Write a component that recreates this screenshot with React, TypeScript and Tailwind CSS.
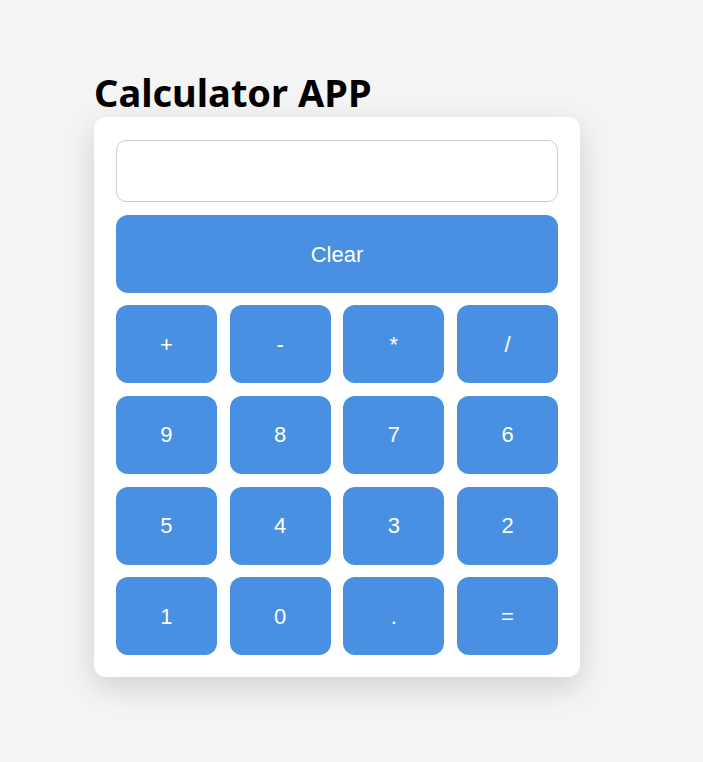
import { useState } from 'react';

const keys = ['+', '-', '*', '/', '9', '8', '7', '6', '5', '4', '3', '2', '1', '0', '.', '='];

export default function App() {
  const [value, setValue] = useState('');

  const press = (k: string) => {
    if (k === '=') {
      try {
        // eslint-disable-next-line no-new-func
        setValue(String(Function(`return (${value})`)()));
      } catch {
        setValue('Error');
      }
      return;
    }
    setValue((v) => v + k);
  };

  return (
    <div className="min-h-[762px] bg-[#f4f4f4] pt-[69px] pl-[94px]">
      <h1 className="text-[38px] font-bold leading-[47px] text-black font-['Noto_Sans',sans-serif]">
        Calculator APP
      </h1>
      <div className="mt-[1px] w-[486px] rounded-[12px] bg-white p-[22px] pt-[23px] shadow-[0_10px_30px_rgba(0,0,0,0.15)]">
        <input
          value={value}
          readOnly
          className="block h-[62px] w-full rounded-[10px] border border-[#cccccc] bg-white px-3 text-right text-2xl outline-none font-['Liberation_Sans',sans-serif]"
        />
        <button
          onClick={() => setValue('')}
          className="mt-[13px] block h-[78px] w-full rounded-[12px] bg-[#4a90e2] text-[22px] text-white font-['Liberation_Sans',sans-serif]"
        >
          Clear
        </button>
        <div className="mt-[12px] grid grid-cols-4 gap-[12.8px]">
          {keys.map((k) => (
            <button
              key={k}
              onClick={() => press(k)}
              className="h-[78px] rounded-[12px] bg-[#4a90e2] text-[22px] text-white font-['Liberation_Sans',sans-serif]"
            >
              {k}
            </button>
          ))}
        </div>
      </div>
    </div>
  );
}
